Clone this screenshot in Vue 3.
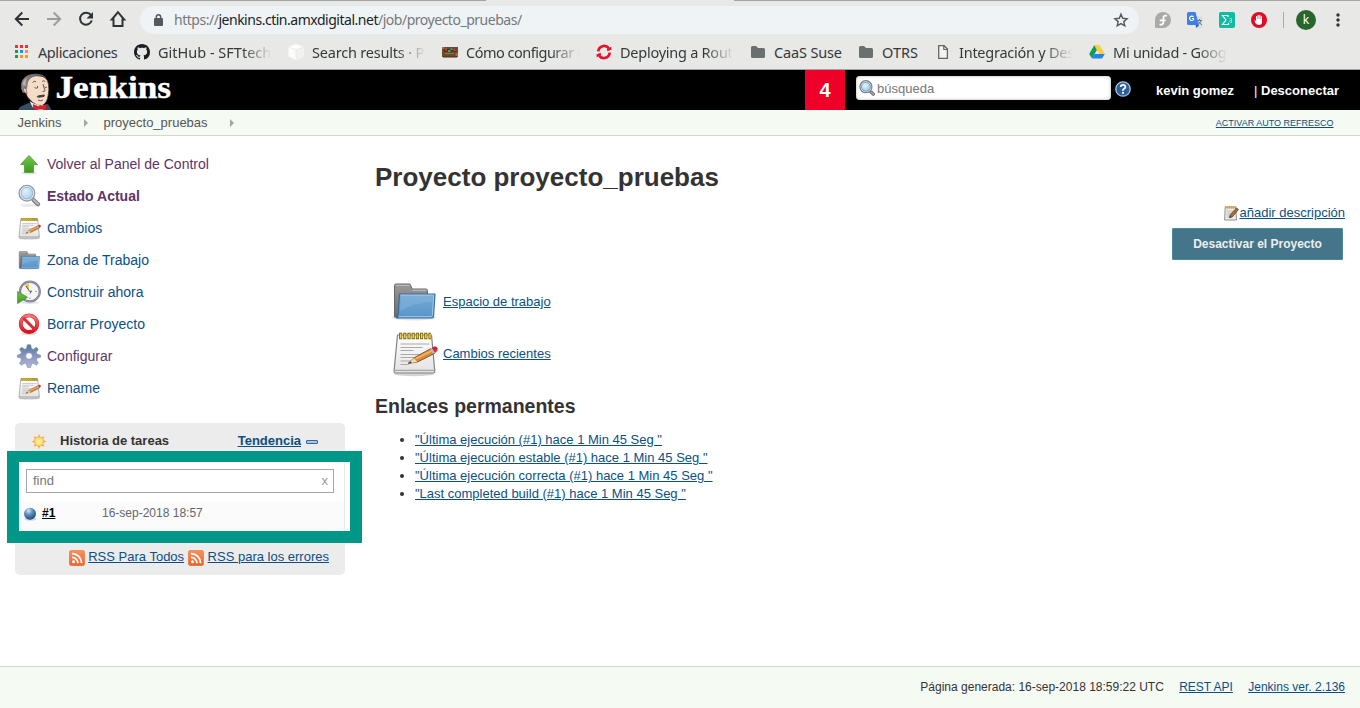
<script setup>
const bookmarks = [
  { label: 'Aplicaciones', icon: 'apps', w: 80, ls: -0.42 },
  { label: 'GitHub - SFTtech', icon: 'github', w: 114, ls: 0, fade: true },
  { label: 'Search results · P', icon: 'cube', w: 114, ls: -0.2, fade: true },
  { label: 'Cómo configurar u', icon: 'chest', w: 114, ls: -0.5, fade: true },
  { label: 'Deploying a Rout', icon: 'openshift', w: 114, ls: -0.25, fade: true },
  { label: 'CaaS Suse', icon: 'dir', w: 68, ls: -0.15 },
  { label: 'OTRS', icon: 'dir', w: 37, ls: 0 },
  { label: 'Integración y Des', icon: 'page', w: 114, ls: -0.25, fade: true },
  { label: 'Mi unidad - Goog', icon: 'drive', w: 114, ls: -0.25, fade: true },
]
const tasks = [
  { label: 'Volver al Panel de Control', icon: 'up', visited: true },
  { label: 'Estado Actual', icon: 'search', visited: true, bold: true },
  { label: 'Cambios', icon: 'notepad' },
  { label: 'Zona de Trabajo', icon: 'folder' },
  { label: 'Construir ahora', icon: 'clock' },
  { label: 'Borrar Proyecto', icon: 'delete' },
  { label: 'Configurar', icon: 'gear', visited: true },
  { label: 'Rename', icon: 'notepad' },
]
const permalinks = [
  '"Última ejecución (#1) hace 1 Min 45 Seg "',
  '"Última ejecución estable (#1) hace 1 Min 45 Seg "',
  '"Última ejecución correcta (#1) hace 1 Min 45 Seg "',
  '"Last completed build (#1) hace 1 Min 45 Seg "',
]
</script>

<template>
  <div class="page">
    <svg class="sprite" width="0" height="0">
      <defs>
        <linearGradient id="gBlue" x1="0" y1="0" x2="0" y2="1"><stop offset="0" stop-color="#76a8d3" /><stop offset="1" stop-color="#5796c9" /></linearGradient>
        <linearGradient id="gGrey" x1="0" y1="0" x2="0" y2="1"><stop offset="0" stop-color="#9a9a9a" /><stop offset="1" stop-color="#6a6a6a" /></linearGradient>
        <linearGradient id="gGreen" x1="0" y1="0" x2="0" y2="1"><stop offset="0" stop-color="#6fc848" /><stop offset="1" stop-color="#3f9a22" /></linearGradient>
        <linearGradient id="gPaper" x1="0" y1="0" x2="0" y2="1"><stop offset="0" stop-color="#ffffff" /><stop offset="1" stop-color="#e2e2e2" /></linearGradient>
        <linearGradient id="gRed" x1="0" y1="0" x2="0" y2="1"><stop offset="0" stop-color="#f37a7a" /><stop offset="1" stop-color="#e0101f" /></linearGradient>
        <linearGradient id="gGear" x1="0" y1="0" x2="0" y2="1"><stop offset="0" stop-color="#55779f" /><stop offset="1" stop-color="#b8b8d8" /></linearGradient>
        <linearGradient id="gRss" x1="0" y1="0" x2="0" y2="1"><stop offset="0" stop-color="#f6945c" /><stop offset="1" stop-color="#f0602c" /></linearGradient>
        <linearGradient id="gHair" x1="0" y1="0" x2="1" y2="0"><stop offset="0" stop-color="#8d8b8a" /><stop offset="1" stop-color="#4d4745" /></linearGradient>
        <radialGradient id="gLens" cx=".4" cy=".35" r=".7"><stop offset="0" stop-color="#e6f2fb" /><stop offset="1" stop-color="#9cc5e8" /></radialGradient>
        <radialGradient id="gBall" cx=".38" cy=".25" r=".75"><stop offset="0" stop-color="#d5e4f2" /><stop offset=".45" stop-color="#5e90c0" /><stop offset="1" stop-color="#1c4c80" /></radialGradient>
        <radialGradient id="gSun"><stop offset="0" stop-color="#fff6a8" /><stop offset="1" stop-color="#fdd866" /></radialGradient>
      </defs>

      <symbol id="i-apps" viewBox="0 0 16 16">
        <path fill="#f02d3a" d="M1 1h3v3H1zM6 1h3v3H6zM11 1h3v3h-3z" />
        <path fill="#0f9d58" d="M1 6h3v3H1zM1 11h3v3H1z" />
        <path fill="#1a8cff" d="M6 6h3v3H6z" />
        <path fill="#f7942e" d="M11 6h3v3h-3zM6 11h3v3H6zM11 11h3v3h-3z" />
      </symbol>
      <symbol id="i-github" viewBox="0 0 16 16">
        <path fill="#1b1f23" d="M8 0C3.58 0 0 3.58 0 8c0 3.54 2.29 6.53 5.47 7.59.4.07.55-.17.55-.38 0-.19-.01-.82-.01-1.49-2.01.37-2.53-.49-2.69-.94-.09-.23-.48-.94-.82-1.13-.28-.15-.68-.52-.01-.53.63-.01 1.08.58 1.23.82.72 1.21 1.87.87 2.33.66.07-.52.28-.87.51-1.07-1.78-.2-3.64-.89-3.64-3.95 0-.87.31-1.59.82-2.15-.08-.2-.36-1.02.08-2.12 0 0 .67-.21 2.2.82.64-.18 1.32-.27 2-.27s1.36.09 2 .27c1.53-1.04 2.2-.82 2.2-.82.44 1.1.16 1.92.08 2.12.51.56.82 1.27.82 2.15 0 3.07-1.87 3.75-3.65 3.95.29.25.54.73.54 1.48 0 1.07-.01 1.93-.01 2.2 0 .21.15.46.55.38A8.01 8.01 0 0 0 16 8c0-4.42-3.58-8-8-8z" />
      </symbol>
      <symbol id="i-cube" viewBox="0 0 16 16">
        <path fill="#fdfdfd" d="M8 0l7.500 3v9.500L8 16 .5 12.500V3z" />
        <path fill="#f1f1f1" d="M8 6v10l7.500-3.500V3z" />
        <path fill="none" stroke="#e3e3e3" stroke-width=".7" d="M.8 3L8 6l7.200-3M8 6v9.500" />
      </symbol>
      <symbol id="i-chest" viewBox="0 0 16 16">
        <path fill="#6b4a2e" d="M0 3h16v10H0z" /><path fill="#452e1c" d="M1 12.500h14V13.500H1zM2 5h12v2.500H2z" />
        <path fill="#a07040" d="M0 3h2.500v2H0zM13.500 9H16v3h-2.500zM3 9h9v1H3z" />
        <path fill="#e0392f" d="M3 4.500h2v2H3z" /><path fill="#37b35a" d="M6 6h2.500v2H6z" /><path fill="#4c9fd0" d="M8.500 4.500h2v1.500h-2z" /><path fill="#e83c39" d="M11.500 5H13.500V7h-2z" />
      </symbol>
      <symbol id="i-openshift" viewBox="0 0 16 16">
        <g fill="none" stroke="#e8112d" stroke-width="2.700"><path d="M2.300 7.400A5.900 5.900 0 0 1 12.800 4.200" /><path d="M13.700 8.600A5.900 5.900 0 0 1 3.200 11.800" /></g>
        <path fill="#e8112d" d="M10.800 5l4.400-2.200.4 2.700-4.200 1.700zM5.200 11L.8 13.200.4 10.500l4.200-1.700z" />
      </symbol>
      <symbol id="i-dir" viewBox="0 0 16 16">
        <path fill="#6a706f" d="M1 3.500Q1 2 2.500 2H6l2 2h5.500Q15 4 15 5.500v7q0 1.500-1.500 1.500h-11Q1 14 1 12.500z" />
      </symbol>
      <symbol id="i-page" viewBox="0 0 16 16">
        <path fill="#f3f3f2" stroke="#636767" stroke-width="1.300" d="M3.700 1.700h5.500l3.200 3.400v9.200H3.700z" />
        <path fill="none" stroke="#636767" stroke-width="1.200" d="M8.800 1.700v3.800h3.600" />
      </symbol>
      <symbol id="i-drive" viewBox="0 0 16 16">
        <path fill="#0f9d58" d="M5.300 1L8 5.700 3 14.500.2 10z" />
        <path fill="#ffcd40" d="M5.300 1h5.400l5.100 9h-5.400z" />
        <path fill="#1e84f0" d="M5.500 10h10.300L13 14.500H3z" />
      </symbol>

      <symbol id="i-up" viewBox="0 0 24 24">
        <ellipse cx="12" cy="21" rx="8" ry="1.600" fill="#e4e4e4" />
        <path fill="url(#gGreen)" stroke="#4c9c33" stroke-width=".8" d="M12 3.400L20.500 12.500H16.500v8h-9v-8H3.500z" />
      </symbol>
      <symbol id="i-search" viewBox="0 0 24 24">
        <ellipse cx="12" cy="21.300" rx="9" ry="1.800" fill="#ececec" />
        <path stroke="#777" stroke-width="4.200" stroke-linecap="round" d="M16.500 16l4.500 4.300" /><path stroke="#b9b9b9" stroke-width="2.200" stroke-linecap="round" d="M16.500 15.800l4.500 4.200" />
        <circle cx="9.900" cy="9.200" r="7.800" fill="url(#gLens)" stroke="#979b9d" stroke-width="1.400" /><circle cx="9.900" cy="9.200" r="6.600" fill="none" stroke="#f0f3f5" stroke-width="1" />
        <circle cx="9.900" cy="9.200" r="5.800" fill="none" stroke="#78a7cf" stroke-width=".7" />
      </symbol>
      <symbol id="i-find" viewBox="0 0 16 16">
        <path stroke="#666" stroke-width="3.200" stroke-linecap="round" d="M12 12l2.300 2.200" /><path stroke="#a9a9a9" stroke-width="1.500" stroke-linecap="round" d="M12 12l2.300 2.200" />
        <circle cx="6.900" cy="6.700" r="6" fill="#fff" stroke="#7d8183" stroke-width="1.300" />
        <circle cx="6.900" cy="6.700" r="4.500" fill="url(#gLens)" stroke="#6b9cc8" stroke-width="1" />
      </symbol>
      <symbol id="i-notepad" viewBox="0 0 48 48">
        <ellipse cx="24" cy="45" rx="20" ry="2.200" fill="#d4d4d4" />
        <path fill="url(#gPaper)" stroke="#828282" stroke-width="1.200" stroke-linejoin="round" d="M7.500 6h34L44.800 42.500q0 1.500-1.500 1.500h-37.500Q4 44 4 42.500z" />
        <path stroke="#a8a8a8" stroke-width="1.300" d="M4.500 41.300h40" />
        <path stroke="#a9a9a9" stroke-width="1.100" d="M10.500 15h29M10.500 18.500h22M10.500 21.500h13M10.500 25.500h24M10.500 28.500h20M10.500 32h12M10.500 35.500h8" />
        <path fill="none" stroke="#7b6716" stroke-width="6.400" stroke-dasharray="3.200 1" d="M9 7h32" /><path fill="none" stroke="#efd44a" stroke-width="4.600" stroke-dasharray="1.500 2.700" d="M9.900 7h31" />
        <path fill="#d88a36" stroke="#6f4319" stroke-width=".8" d="M18 34.500l6.500-6L41 19.500l3.500 5L27.500 33z" />
        <path fill="#f6b76c" d="M25.500 28.700L42 21l.8 1.200-16.300 8z" />
        <path fill="#f0d7ac" d="M18 34.500l6-5.500 3.200 4z" /><path fill="#333" d="M18 34.500l2.500-2.300 1.200 1.800z" />
        <path fill="#b7b7c3" d="M40 19.800l2.300-1 3 4.700-2.300 1.200z" /><path fill="#e3222e" stroke="#a80d1b" stroke-width=".6" d="M42.300 18.800q3.700-2.200 4.900.5.800 2.300-1.900 4.200z" />
      </symbol>
      <symbol id="i-folder" viewBox="0 0 48 48">
        <ellipse cx="24" cy="40.500" rx="22" ry="3" fill="#e2e2e2" />
        <path fill="url(#gGrey)" stroke="#666" stroke-width="1" d="M4.500 40V8.500Q4.500 7 6 7h13.500q1 0 1.200 1.500l1.300 3.500H36q1.500 0 1.500 1.500V40z" />
        <path stroke="#c4c4c4" stroke-width="1" d="M6 8.300h13.500M22 13.200h14.500" />
        <path fill="url(#gBlue)" stroke="#3b6d9b" stroke-width="1.200" stroke-linejoin="round" d="M9.500 17h35.500L43.500 39.500q-.2 1.500-1.700 1.500H6.500Q8 40 8.300 36z" />
        <path fill="none" stroke="#a3c9e8" stroke-width="1" d="M10.700 18.200h33L42.300 38.700q-.1 1-1.100 1H9" />
        <path fill="#8dbbe0" opacity=".4" d="M11 18.700h32.300l-.5 6Q22 26 10.200 34z" />
      </symbol>
      <symbol id="i-clock" viewBox="0 0 24 24">
        <ellipse cx="13" cy="22.700" rx="9" ry="1.200" fill="#e2e2e2" />
        <circle cx="12.900" cy="11.500" r="9.900" fill="#f4f4f0" stroke="#7d7d92" stroke-width="2.200" /><circle cx="12.900" cy="11.500" r="10.100" fill="none" stroke="#a2a2b8" stroke-width=".7" />
        <path fill="#ecc450" d="M7.500 5L12 3.500v7z" /><path d="M9 6l3.700 5.500 1.800-.5-1.500 2.500" fill="none" stroke="#555" stroke-width="1" />
        <path d="M19.800 11.500h-1.300M12.900 19v-1.300" stroke="#888" />
        <path fill="url(#gGreen)" stroke="#3c8a2a" stroke-width=".7" d="M.6 11.500L10.500 17.300.6 23.500z" />
      </symbol>
      <symbol id="i-delete" viewBox="0 0 24 24">
        <ellipse cx="12" cy="21.500" rx="8" ry="1.600" fill="#ddd" />
        <circle cx="12" cy="11.700" r="8.300" fill="#fff" stroke="#c01c28" stroke-width="3.800" /><circle cx="12" cy="11.700" r="8.300" fill="none" stroke="url(#gRed)" stroke-width="3" />
        <path stroke="#dc2c38" stroke-width="3" d="M6.200 5.900l11.600 11.600" />
      </symbol>
      <symbol id="i-gear" viewBox="0 0 24 24">
        <path fill="url(#gGear)" fill-rule="evenodd" stroke="#7286ae" stroke-width=".6" stroke-linejoin="round" d="M10.400.7h3.200l.9 3.900 1.700.8 3.300-2.100 1.800 1.900-2 3.300.8 1.800 3.400.9v2l-3.400.9-.8 2 2 3-1.800 2.100-3.300-2-1.700.8-.9 3.400h-3.200l-.9-3.400-1.900-.8-3.100 2-2-2 2-3.100-.8-2-3.200-.9v-2l3.200-1.200.8-1.700-2-3.100 2-2 3.100 2 1.900-.8zM12 8.700a3.300 3.300 0 1 0 0 6.600 3.300 3.300 0 0 0 0-6.600z" />
      </symbol>
      <symbol id="i-rss" viewBox="0 0 16 16">
        <rect x=".3" y=".3" width="15.400" height="15.400" rx="2.500" fill="url(#gRss)" stroke="#e2672c" stroke-width=".5" />
        <circle cx="4.500" cy="11.800" r="1.500" fill="#fff" />
        <path fill="none" stroke="#fff" stroke-width="1.800" d="M3 7.300a5.900 5.900 0 0 1 5.900 5.900M3 3.600a9.600 9.600 0 0 1 9.600 9.600" />
      </symbol>
    </svg>

    <header class="chrome">
      <div class="tabline"><i class="left"></i><i class="right"></i></div>
      <div class="toolbar">
        <div class="nav">
          <svg width="16" height="16" viewBox="0 0 16 16" fill="none" stroke="#2e3436" stroke-width="2"><path d="M15 8H2.500M8.300 1.500L1.800 8l6.500 6.500" /></svg>
          <svg width="16" height="16" viewBox="0 0 16 16" fill="none" stroke="#9c9d9d" stroke-width="2"><path d="M1 8h12.500M7.700 1.500L14.200 8l-6.500 6.500" /></svg>
          <svg width="16" height="16" viewBox="0 0 16 16"><path d="M13 4.200A6 6 0 1 0 13.800 9.500" fill="none" stroke="#2e3436" stroke-width="2" /><path d="M15 1v6.500H8.500z" fill="#2e3436" /></svg>
          <svg width="18" height="18" viewBox="0 0 18 18"><path d="M9 2.200L2.800 9.500H4.500V16h9V9.500h1.700z" fill="none" stroke="#2e3436" stroke-width="2" /></svg>
        </div>
        <div class="omnibox">
          <svg width="9" height="12" viewBox="0 0 9 12"><path fill="#54595d" d="M0 5q0-1 1-1h7q1 0 1 1v6q0 1-1 1H1q-1 0-1-1z" /><path d="M2.300 4.500V3a2.200 2.200 0 0 1 4.400 0v1.500" fill="none" stroke="#54595d" stroke-width="1.400" /></svg>
          <span class="url">https://<b>jenkins.ctin.amxdigital.net</b>/job/proyecto_pruebas/</span>
          <svg class="star" width="16" height="16" viewBox="0 0 16 16"><path d="M8 2.200l1.700 4.100 4.400.4-3.300 2.900 1 4.300L8 11.600l-3.800 2.300 1-4.300L1.900 6.700l4.400-.4z" fill="none" stroke="#54595d" stroke-width="1.400" /></svg>
        </div>
        <div class="extensions">
          <svg width="16" height="16" viewBox="0 0 16 16"><path fill="#a9a9a9" d="M8 0a8 8 0 1 1 0 16H1.500Q0 16 0 14.500V8a8 8 0 0 1 8-8z" /><path d="M12 3.800Q8.600 2.600 8.400 6v4.500Q8 13.300 4.500 12.400M4.700 8.400h6" fill="none" stroke="#fff" stroke-width="1.800" /></svg>
          <svg width="16" height="16" viewBox="0 0 16 16"><path fill="#dcdcdc" d="M6 4.500h9.500v11.500H9z" /><path fill="#3f7fe8" d="M0 1.500Q0 0 1.500 0H8.500l3.500 13H1.500Q0 13 0 11.500z" /><path fill="#2d5cb8" d="M8.500 13h3.500L9.500 16z" /><path d="M6.500 5A2.200 2.200 0 1 0 6.600 7.500V6.500H4.800" fill="none" stroke="#fff" stroke-width="1.100" /><path d="M10.300 8.500h4.700M12.500 7v1.500M14 8.500q-1 3-3 4M11.500 9.500q1.500 2.500 3.500 3.200" fill="none" stroke="#607d8b" /></svg>
          <svg width="16" height="16" viewBox="0 0 16 16"><rect width="16" height="16" rx="2" fill="#0fbba3" /><path d="M9 5V3.500H3.500L7 8l-3.500 4.500H9.500V11" fill="none" stroke="#fff" stroke-width="1.200" /><path d="M10.500 6.500h2v4H11q-1-1 0-2h1.500" fill="none" stroke="#80e2d3" /></svg>
          <svg width="16" height="16" viewBox="0 0 16 16"><circle cx="8" cy="8" r="8" fill="#e00b26" /><path fill="#fff" d="M5 9V4.200q.6-.8 1.200 0V7h.4V3.200q.6-.8 1.200 0V7h.4V3.200q.6-.8 1.200 0V7h.4V4.200q.6-.8 1.200 0V10q0 3-3 3-2.500 0-3.700-2L3.400 8.600q.6-.9 1.600.4z" /></svg>
          <i class="sep"></i>
          <span class="avatar">k</span>
          <svg class="dots" width="4" height="14" viewBox="0 0 4 14" fill="#2e3436"><circle cx="2" cy="2" r="1.700" /><circle cx="2" cy="7" r="1.700" /><circle cx="2" cy="12" r="1.700" /></svg>
        </div>
      </div>
      <div class="bookmarks">
        <div v-for="b in bookmarks" :key="b.label" class="bookmark">
          <svg width="16" height="16"><use :href="'#i-' + b.icon" /></svg>
          <span :class="{ fade: b.fade }" :style="{ width: b.w + 'px', letterSpacing: b.ls + 'px' }">{{ b.label }}</span>
        </div>
      </div>
    </header>

    <div class="topbar">
      <a class="logo">
        <svg width="156" height="40" viewBox="0 0 156 40">
          <path fill="#335061" d="M.5 40Q1 36.500 5 35.500l5.500-2.500L24 36l6-2 3.500 6z" />
          <path fill="#f5dcc8" stroke="#40302a" stroke-width=".7" d="M8 12Q12 5 20 5q9 .5 10.500 9.500.8 5-.3 10.500-1 8-6 10.500-5 1-9.500-3L9.500 27 7 21z" />
          <path fill="url(#gHair)" d="M6.500 18Q1.500 16 4.500 10 9 3.500 18 3.800q8 0 11 5.200-5-3.200-11-2.700-6 .7-8 5.700-.5 3-1 7z" />
          <path fill="#b5b2b0" d="M4.500 14.500q.5-4 4-6.500-1 3.500-.8 8z" />
          <path fill="#8e8c8b" d="M3.300 14q-.8 4.500 1.700 9l2-1.500-1-4z" />
          <path fill="#f0cdb2" stroke="#60453b" stroke-width=".6" d="M8 18.500q-2.800-1.500-2.500 1.500.5 3.500 3.500 3.500z" />
          <path fill="#4d4038" d="M18.500 27q1.500-2.500 4.500-2 3.500-1 4 .5-.5 2-3 1.800-3 1-5.500-.3z" />
          <path fill="none" stroke="#4a3a33" stroke-width=".8" d="M14.500 12.500q1.500-1.800 3.500-1M24 11.500q1.700-1.500 3.300 0M16.500 17.500q1.800 1.500 3.500 0M19.500 16v1.800M26.500 17q1.300 1 2.500 0M25 14q.5 3 2 6 .5 1.800-2.500 1.500M20 30q2.500 1.500 5 0" />
          <path fill="#fff" d="M11.500 31l3 6 4 3h7l3-5.500q-8 3-17-3.500z" />
          <path fill="#e01f2d" stroke="#8c1319" stroke-width=".5" d="M15 34.500l5.500 2 1.800-1 1.700.8 4-2 .7 5.700-4.700-.8h-3l-5 1.100z" />
          <text x="37.500" y="28" textLength="115.500" lengthAdjust="spacingAndGlyphs">Jenkins</text>
        </svg>
      </a>
      <div class="alerts">4</div>
      <div class="searchbox">
        <svg width="16" height="16"><use href="#i-find" /></svg>
        <span>búsqueda</span>
      </div>
      <svg class="help" width="16" height="16" viewBox="0 0 16 16"><circle cx="8" cy="8" r="7.200" fill="#2d5f9a" stroke="#a8c4e2" stroke-width="1.300" /><path d="M5.600 6Q5.700 3.800 8 3.800T10.400 6Q10.400 7 9 7.800T8 10" fill="none" stroke="#fff" stroke-width="1.700" /><rect x="7.100" y="11" width="1.900" height="1.800" fill="#fff" /></svg>
      <a class="user">kevin gomez</a>
      <span class="logout">| <b>Desconectar</b></span>
    </div>

    <nav class="crumbs">
      <span class="c1">Jenkins</span><i></i><span class="c2">proyecto_pruebas</span><i></i>
      <a>ACTIVAR AUTO REFRESCO</a>
    </nav>

    <div class="body">
      <aside class="side">
        <a v-for="t in tasks" :key="t.label" class="task" :class="{ visited: t.visited, bold: t.bold }">
          <svg width="24" height="24"><use :href="'#i-' + t.icon" /></svg><span>{{ t.label }}</span>
        </a>
        <section class="history">
          <div class="hhead">
            <svg width="16" height="16" viewBox="0 0 16 16"><path fill="#f6a63c" d="M8 1l1.300 3.200h-2.600zM8 16l1.300-3.200h-2.600zM.5 8.500l3.200-1.300v2.600zM15.500 8.500l-3.200-1.300v2.600zM2.700 3.200l3.200 1.300L4 6.400zM13.300 3.200L10.100 4.500 12 6.400zM2.700 13.800l3.200-1.300L4 10.600zM13.300 13.800l-3.200-1.300 1.900-1.900z" /><circle cx="8" cy="8.500" r="4.600" fill="url(#gSun)" stroke="#f6b44c" stroke-width="1" /></svg>
            <b>Historia de tareas</b>
            <a>Tendencia</a><i></i>
          </div>
          <div class="hbody">
            <div class="find"><span>find</span><span class="clear">x</span></div>
            <div class="build">
              <svg width="14" height="14" viewBox="0 0 14 14"><ellipse cx="7.500" cy="12" rx="6" ry="1.800" fill="#d6d6d6" /><circle cx="7" cy="6.700" r="6" fill="url(#gBall)" /></svg>
              <a>#1</a><span>16-sep-2018 18:57</span>
            </div>
          </div>
          <div class="hfoot">
            <svg width="16" height="16"><use href="#i-rss" /></svg><a class="all">RSS Para Todos</a>
            <svg width="16" height="16"><use href="#i-rss" /></svg><a>RSS para los errores</a>
          </div>
          <div class="highlight"></div>
        </section>
      </aside>

      <main class="main">
        <h1>Proyecto proyecto_pruebas</h1>
        <div class="desc">
          <svg width="15" height="16" viewBox="0 0 15 16"><path fill="#ededed" stroke="#858585" stroke-width=".9" d="M1.200 2h10.600l.7 13H.6z" /><path stroke="#aaa" stroke-width=".7" d="M2.500 6h7M2.500 8h5M2.500 10h4M2.500 12h3" /><path stroke="#dba628" stroke-width="2.800" stroke-dasharray="1.400 .5" d="M1.200 2.300h11" /><path fill="#a4703a" stroke="#4d3822" stroke-width=".7" d="M5.500 12.700L6.200 9.700l6.300-6.700 2 1.500-6.200 7.500z" /><path fill="#333" d="M5.500 12.700l.4-1.700 1.300.9z" /></svg>
          <a>añadir descripción</a>
        </div>
        <button>Desactivar el Proyecto</button>
        <div class="shortcuts">
          <div><svg width="48" height="48"><use href="#i-folder" /></svg><a>Espacio de trabajo</a></div>
          <div><svg width="48" height="48"><use href="#i-notepad" /></svg><a>Cambios recientes</a></div>
        </div>
        <h2>Enlaces permanentes</h2>
        <ul><li v-for="p in permalinks" :key="p"><a>{{ p }}</a></li></ul>
      </main>
    </div>

    <footer class="footer">
      <span>Página generada: 16-sep-2018 18:59:22 UTC</span><a>REST API</a><a>Jenkins ver. 2.136</a>
    </footer>
  </div>
</template>

<style>
body { background: #fff; overflow: hidden; }
</style>

<style scoped>
* { box-sizing: border-box; }
svg { display: block; flex: none; }
.page { display: flex; flex-direction: column; height: 708px; overflow: hidden; font: 13px/18px "Liberation Sans", Arial, sans-serif; color: #333; }
.sprite { position: absolute; }
a { color: #0b4f86; text-decoration: underline; }

.chrome { height: 70px; flex: none; background: #e8e8e7; border-bottom: 1px solid #a1a1a0; font-family: "Noto Sans", "Open Sans", sans-serif; color: #343a3c; }
.tabline { height: 1px; display: flex; justify-content: space-between; }
.tabline i { height: 1px; background: #a5a5a4; }
.tabline .left { width: 486px; }
.tabline .right { width: 626px; }
.toolbar { height: 38px; display: flex; align-items: center; }
.nav { width: 140px; padding-left: 14px; display: flex; gap: 16px; align-items: center; margin-top: -2px; }
.nav svg:last-child { margin-left: -1px; }
.omnibox { width: 999px; height: 28px; border-radius: 14px; background: #eff3f5; display: flex; align-items: center; padding: 0 10px 0 13.500px; }
.url { margin-left: 11.500px; font-size: 14px; line-height: 28px; color: #75797c; letter-spacing: -0.48px; white-space: nowrap; }
.url b { font-weight: 400; color: #202426; }
.star { margin-left: auto; }
.extensions { display: flex; align-items: center; padding-left: 16px; }
.extensions svg { margin-right: 16px; }
.sep { width: 1px; height: 16px; background: #a9a9a9; margin-right: 12px; }
.avatar { width: 20px; height: 20px; border-radius: 50%; background: #27662c; color: #fff; font-size: 12px; line-height: 19px; text-align: center; margin-top: -1px; }
.extensions .dots { margin: 0 0 0 20px; }
.bookmarks { display: flex; gap: 16px; padding-left: 14px; height: 26px; align-items: center; }
.bookmark { display: flex; gap: 8px; align-items: center; }
.bookmark span { font-size: 14.500px; line-height: 26px; white-space: nowrap; flex: none; }
.bookmark .fade { overflow: hidden; -webkit-mask-image: linear-gradient(90deg, #000 74%, transparent 100%); mask-image: linear-gradient(90deg, #000 74%, transparent 100%); }

.topbar { height: 40px; flex: none; background: #000; color: #fff; display: flex; align-items: center; }
.logo { width: 805px; padding-left: 18px; }
.logo text { font: bold 30.500px "Liberation Serif", serif; fill: #fff; stroke: #fff; stroke-width: .4px; }
.alerts { width: 40px; height: 40px; background: #ef0028; font: bold 20px/41px "Liberation Sans", sans-serif; text-align: center; }
.searchbox { margin: -4px 0 0 11px; width: 255px; height: 24px; border-radius: 4px; background: #fff; display: flex; align-items: center; padding-left: 3px; box-shadow: inset 0 0 3px #aaa; }
.searchbox span { color: #777; margin: 2px 0 0 2px; }
.help { margin: -2px 0 0 4px; }
.user { color: #fff; font-weight: bold; text-decoration: none; margin: 2px 0 0 25px; width: 98px; }
.logout { margin-top: 2px; }

.crumbs { height: 26px; flex: none; background: #f5faf3; border-bottom: 1px solid #d3d7cf; display: flex; align-items: center; color: #555; padding: 0 26.500px 0 17.500px; }
.crumbs .c1 { width: 66px; }
.crumbs .c2 { width: 126.500px; }
.crumbs i { width: 0; height: 0; border: 4px solid transparent; border-left-color: #a5a5a5; border-right-width: 0; margin-right: 16px; }
.crumbs a { margin-left: auto; font-size: 9px; }

.body { flex: 1; display: flex; min-height: 0; }
.side { width: 345px; padding: 12px 0 0 15px; }
.task { display: flex; align-items: center; height: 32px; padding-left: 2px; font-size: 14px; text-decoration: none; }
.task span { margin-left: 6px; }
.task.visited { color: #5c3566; }
.task.bold { font-weight: bold; }
.history { position: relative; width: 330px; height: 152px; margin-top: 19px; background: #ececec; border-radius: 5px; }
.hhead { height: 39px; display: flex; align-items: center; padding: 0 27px 4px 16px; }
.hhead b { margin-left: 13px; width: 178px; }
.hhead a { font-weight: bold; }
.hhead i { width: 12px; height: 4px; margin: 3px 0 0 5px; border: 1px solid #2f669c; border-radius: 1px; background: #a9c8e6; }
.hbody { height: 70px; margin: 0 1px 0 3px; background: #fff; padding-top: 7px; display: flex; flex-direction: column; }
.find { margin: 0 10px 8px 8px; height: 24px; border: 1px solid #a6a6a6; display: flex; justify-content: space-between; align-items: center; padding: 0 5px 0 6px; color: #777; }
.find .clear { color: #999; }
.build { flex: 1; background: #fbfbfb; display: flex; align-items: flex-start; font-size: 12px; padding: 3px 0 0 5px; color: #666; }
.build svg { margin-top: 3px; }
.build a { color: #000; font-weight: bold; width: 60px; margin-left: 5px; }
.hfoot { display: flex; align-items: center; justify-content: flex-end; height: 36px; padding: 14px 16px 0 0; }
.hfoot svg { margin-top: 1px; }
.hfoot a { margin-left: 3.500px; }
.hfoot .all { margin-left: 3px; margin-right: 4px; }
.highlight { position: absolute; left: -8px; top: 28px; width: 355px; height: 92px; border: 12px solid #009688; border-top-width: 11px; }

.main { flex: 1; padding: 26px 15px 0 30px; display: flex; flex-direction: column; }
h1 { margin: 0; font-size: 26px; line-height: 30px; }
.desc { display: flex; justify-content: flex-end; align-items: center; margin-top: 12px; height: 18px; }
button { align-self: flex-end; margin: 6px 2px 0 0; width: 171px; height: 32px; border: 1px solid #4a8a98; border-radius: 1px; background: #44758a; color: #eee; font: bold 12px "Liberation Sans", sans-serif; padding: 0; }
.shortcuts { padding: 17px 0 0 15px; display: flex; flex-direction: column; gap: 4px; }
.shortcuts div { display: flex; align-items: center; }
.shortcuts a { margin: 2px 0 0 5px; }
h2 { margin: 17px 0 0; font-size: 19.500px; line-height: 24px; }
ul { margin: 13px 0 0; padding: 0 0 0 40px; }

.footer { height: 42px; flex: none; border-top: 1px solid #d3d7cf; background: #f5faf3; display: flex; justify-content: flex-end; align-items: center; gap: 15.300px; padding: 0 15px 2px 0; font-size: 12px; }
</style>
